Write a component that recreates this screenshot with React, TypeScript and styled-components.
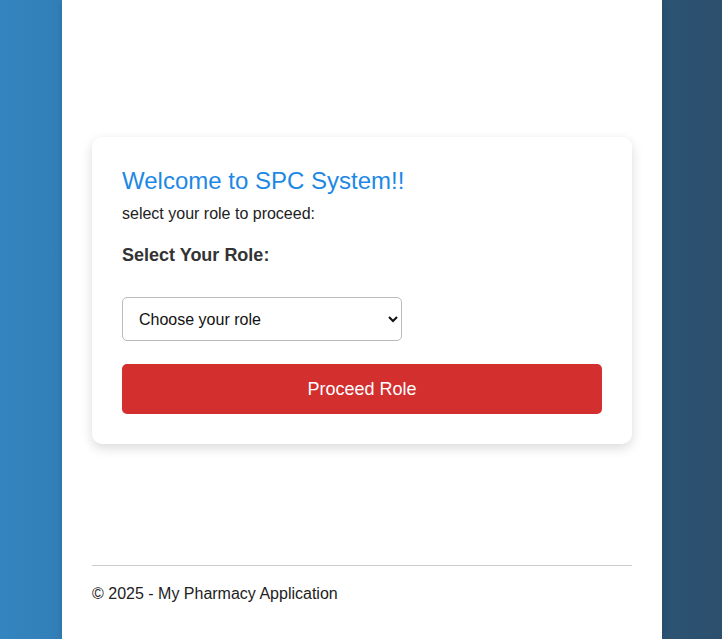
import React from "react";
import styled, { createGlobalStyle } from "styled-components";

const GlobalStyle = createGlobalStyle`
  html, body { margin: 0; padding: 0; }
  body {
    font-family: "Liberation Sans", Arial, sans-serif;
    background: linear-gradient(to right, #3384bf, #2c4f6d);
    min-height: 100vh;
    color: #222;
    padding-left: 2px;
  }
`;

const Page = styled.div`
  width: 600px;
  min-height: 639px;
  margin: 0 auto;
  background: #fff;
  box-shadow: 0 0 8px rgba(0, 0, 0, 0.15);
  padding: 137px 30px 0;
  box-sizing: border-box;
`;

const Card = styled.div`
  background: #fff;
  border-radius: 10px;
  box-shadow: 0 4px 12px rgba(0, 0, 0, 0.15);
  padding: 30px;
`;

const Title = styled.h2`
  margin: 0 0 10px;
  font-size: 24px;
  font-weight: normal;
  color: #1e88e5;
`;

const Subtitle = styled.p`
  margin: 0 0 22px;
  font-size: 16px;
  color: #222;
`;

const Label = styled.label`
  display: block;
  font-size: 18px;
  font-weight: bold;
  color: #333;
  margin-bottom: 31px;
`;

const Select = styled.select`
  display: block;
  width: 280px;
  height: 44px;
  padding: 0 8px 0 12px;
  font-family: "Liberation Sans", Arial, sans-serif;
  font-size: 16px;
  color: #111;
  background: #fff;
  border: 1px solid #bbb;
  border-radius: 5px;
  box-sizing: border-box;
`;

const Button = styled.button`
  display: block;
  width: 100%;
  height: 50px;
  margin-top: 23px;
  background: #d32f2f;
  color: #fff;
  border: none;
  border-radius: 5px;
  font-family: "Liberation Sans", Arial, sans-serif;
  font-size: 18px;
  cursor: pointer;
`;

const Footer = styled.footer`
  margin-top: 121px;
  border-top: 1px solid #ccc;
  padding-top: 19px;
  font-size: 16px;
  color: #222;
`;

export default function App() {
  return (
    <>
      <GlobalStyle />
      <Page>
        <Card>
          <Title>Welcome to SPC System!!</Title>
          <Subtitle>select your role to proceed:</Subtitle>
          <Label htmlFor="role">Select Your Role:</Label>
          <Select id="role" defaultValue="">
            <option value="">Choose your role</option>
            <option value="admin">Admin</option>
            <option value="pharmacist">Pharmacist</option>
          </Select>
          <Button>Proceed Role</Button>
        </Card>
        <Footer>© 2025 - My Pharmacy Application</Footer>
      </Page>
    </>
  );
}
